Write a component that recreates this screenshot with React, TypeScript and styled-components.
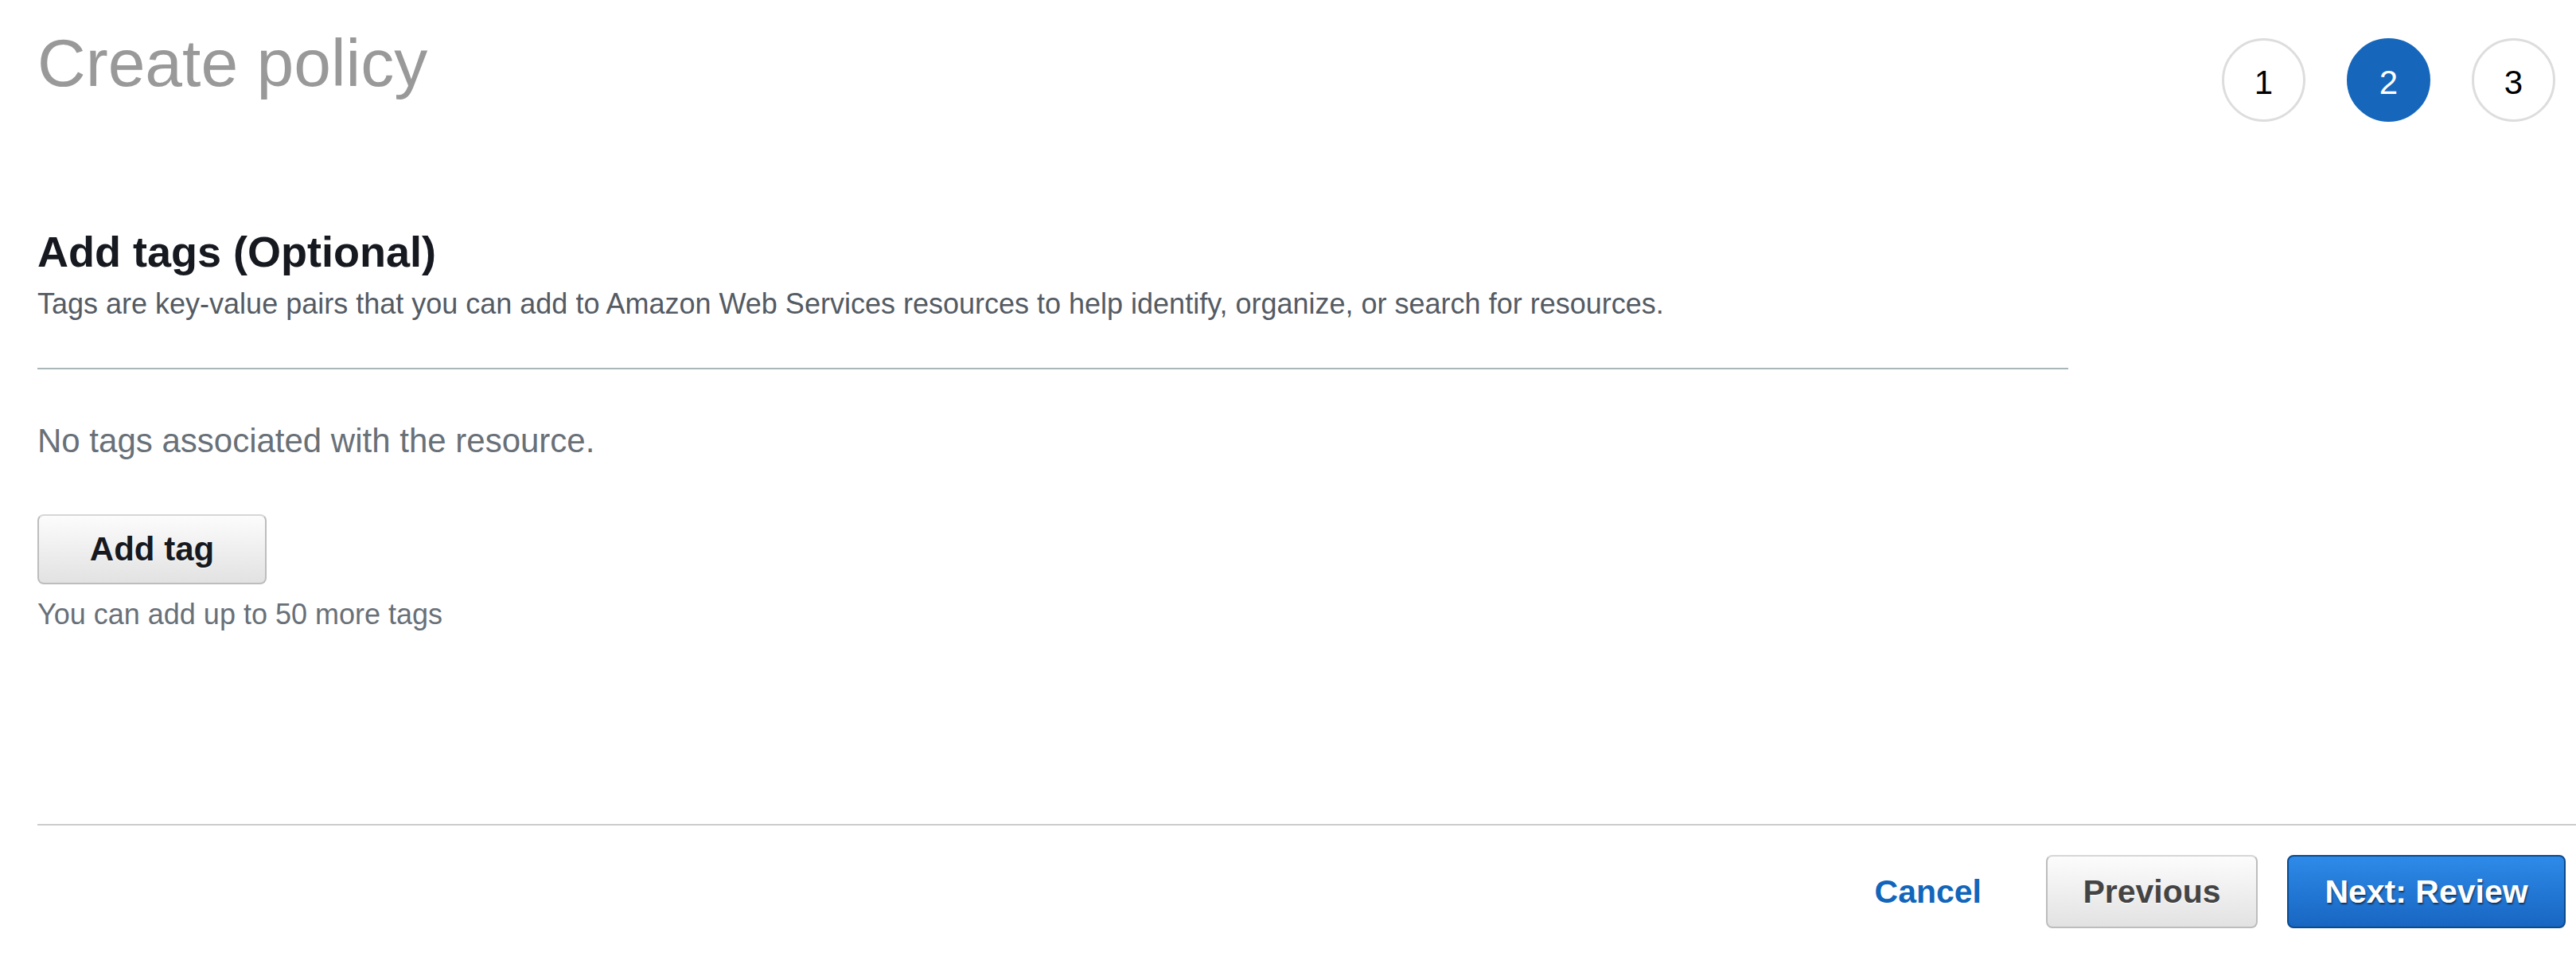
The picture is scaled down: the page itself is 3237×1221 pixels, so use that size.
import styled, { createGlobalStyle } from 'styled-components';

const GlobalStyle = createGlobalStyle`
    html, body {
        margin: 0;
        padding: 0;
        background: #ffffff;
    }
    body {
        font-family: "Liberation Sans", Arial, Helvetica, sans-serif;
    }
`;

export default function App() {
    const steps = [1, 2, 3];
    const current = 2;

    return (
        <>
            <GlobalStyle />
            <Page>
                <Header>
                    <Title>Create policy</Title>
                    <Stepper>
                        {steps.map(step => (
                            <Step key={step} $active={step === current}>
                                {step}
                            </Step>
                        ))}
                    </Stepper>
                </Header>

                <Section>
                    <SectionTitle>Add tags (Optional)</SectionTitle>
                    <SectionDesc>
                        Tags are key-value pairs that you can add to Amazon Web Services resources to help identify, organize, or search for resources.
                    </SectionDesc>
                    <SectionDivider />
                    <EmptyText>No tags associated with the resource.</EmptyText>
                    <Button $width={288} $height={88} $fontSize={42}>
                        Add tag
                    </Button>
                    <Hint>You can add up to 50 more tags</Hint>
                </Section>

                <FooterDivider />
                <Actions>
                    <LinkButton>Cancel</LinkButton>
                    <Button $width={266} $height={92} $fontSize={41} $muted>
                        Previous
                    </Button>
                    <Button $width={350} $height={92} $fontSize={41} $primary>
                        Next: Review
                    </Button>
                </Actions>
            </Page>
        </>
    );
}

// Page
const Page = styled.div`
    box-sizing: border-box;
    width: 3237px;
    height: 1221px;
    padding: 37px 0 0 47px;
    overflow: hidden;
`;

// Header + stepper
const Header = styled.header`
    display: flex;
    justify-content: space-between;
    align-items: flex-start;
    padding-right: 26px;
`;

const Title = styled.h1`
    margin: 0;
    font-size: 84px;
    line-height: 84px;
    font-weight: 400;
    color: #999999;
`;

const Stepper = styled.ol`
    display: flex;
    gap: 52px;
    list-style: none;
    margin: 11px 0 0;
    padding: 0;
`;

const Step = styled.li<{ $active?: boolean }>`
    box-sizing: border-box;
    width: 105px;
    height: 105px;
    padding-top: 6px;
    border-radius: 50%;
    border: 3px solid ${p => (p.$active ? '#1667bb' : '#dddddd')};
    background: ${p => (p.$active ? '#1667bb' : '#ffffff')};
    color: ${p => (p.$active ? '#ffffff' : '#000000')};
    display: flex;
    align-items: center;
    justify-content: center;
    font-size: 42px;
    line-height: 42px;
`;

// Tags section
const Section = styled.section`
    width: 2552px;
    margin-top: 136px;
`;

const SectionTitle = styled.h2`
    margin: 0;
    font-size: 54px;
    line-height: 54px;
    font-weight: 700;
    color: #16191f;
`;

const SectionDesc = styled.p`
    margin: 21px 0 0;
    font-size: 36px;
    line-height: 36px;
    color: #545b64;
`;

const SectionDivider = styled.hr`
    margin: 62px 0 0;
    border: 0;
    height: 2px;
    background: #aab7b8;
`;

const EmptyText = styled.p`
    margin: 69px 0 71px;
    font-size: 42px;
    line-height: 42px;
    color: #687078;
`;

const Hint = styled.p`
    margin: 20px 0 0;
    font-size: 36px;
    line-height: 36px;
    color: #687078;
`;

// Buttons
const Button = styled.button<{
    $width: number;
    $height: number;
    $fontSize: number;
    $primary?: boolean;
    $muted?: boolean;
}>`
    box-sizing: border-box;
    display: flex;
    align-items: center;
    justify-content: center;
    width: ${p => p.$width}px;
    height: ${p => p.$height}px;
    padding: 0;
    border-radius: 8px;
    font-family: inherit;
    font-size: ${p => p.$fontSize}px;
    line-height: 1;
    font-weight: 700;
    cursor: pointer;

    border: 2px solid ${p => (p.$primary ? '#0c4a8c' : '#bdbdbd')};
    border-top-color: ${p => (p.$primary ? '#0c4a8c' : '#d6d6d6')};
    background: ${p =>
        p.$primary
            ? 'linear-gradient(#2e8ae8, #1866c2)'
            : 'linear-gradient(#fcfcfc, #e2e2e2)'};
    color: ${p => (p.$primary ? '#ffffff' : p.$muted ? '#444444' : '#16191f')};
    text-shadow: ${p =>
        p.$primary ? '1px 2px 2px rgba(0, 0, 0, 0.55)' : '0 1px 1px #ffffff'};
`;

const LinkButton = styled.button`
    margin-right: 44px;
    padding: 0;
    border: 0;
    background: none;
    font-family: inherit;
    font-size: 41px;
    line-height: 1;
    font-weight: 700;
    color: #1166bb;
    cursor: pointer;
`;

// Footer
const FooterDivider = styled.hr`
    margin: 245px 0 0;
    border: 0;
    height: 2px;
    background: #cccccc;
`;

const Actions = styled.div`
    display: flex;
    justify-content: flex-end;
    align-items: center;
    gap: 37px;
    margin-top: 37px;
    padding-right: 13px;
`;
